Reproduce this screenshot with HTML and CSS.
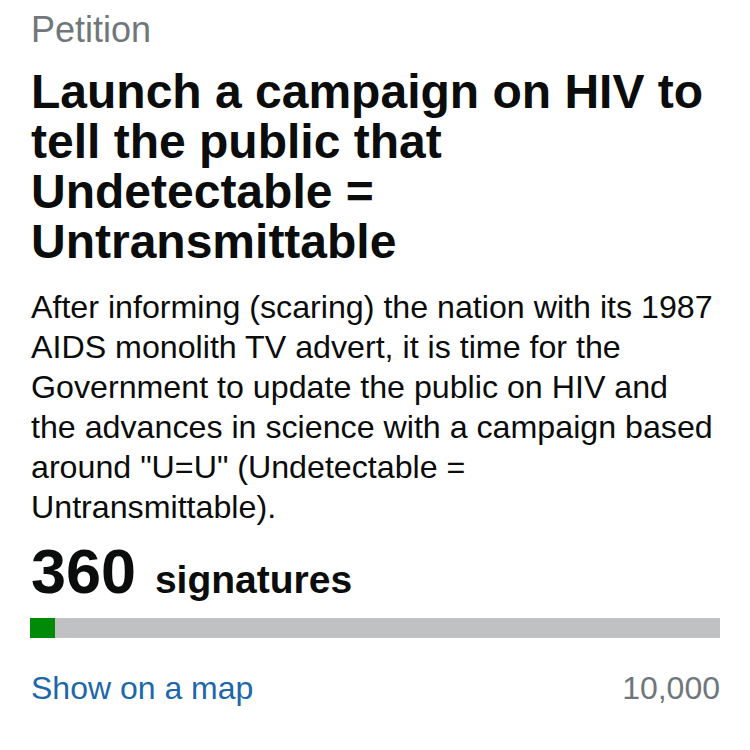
FILE: index.html
```html
<!DOCTYPE html>
<html lang="en">
<head>
<meta charset="utf-8">
<title>Petition</title>
<link rel="stylesheet" href="styles.css">
</head>
<body>
<main class="petition">
  <p class="kicker">Petition</p>
  <h1 class="title">Launch a campaign on HIV to tell the public that Undetectable = Untransmittable</h1>
  <p class="summary">After informing (scaring) the nation with its 1987 AIDS monolith TV advert, it is time for the Government to update the public on HIV and the advances in science with a campaign based around "U=U" (Undetectable = Untransmittable).</p>
  <p class="signatures"><span class="count">360</span> <span class="label">signatures</span></p>
  <div class="progress"><div class="progress-fill" style="width: 3.6%"></div></div>
  <div class="footer-row">
    <a class="map-link" href="#">Show on a map</a>
    <span class="target">10,000</span>
  </div>
</main>
</body>
</html>
```

FILE: styles.css
```css
html, body {
  margin: 0;
  padding: 0;
  background: #ffffff;
}

body {
  font-family: "Liberation Sans", Arial, Helvetica, sans-serif;
  color: #0b0c0c;
}

.petition {
  padding: 10px 30px 0 30px;
  display: flex;
  flex-direction: column;
}

.kicker {
  margin: 0;
  font-size: 36px;
  line-height: 40px;
  color: #6f777b;
  padding-left: 1px;
}

.title {
  margin: 17px 0 0 0;
  font-size: 48px;
  line-height: 50px;
  font-weight: 700;
  padding-left: 1px;
}

.summary {
  margin: 20px 0 0 0;
  font-size: 32.2px;
  line-height: 40px;
  padding-left: 1px;
  padding-right: 3px;
}

.signatures {
  margin: 9px 0 0 0;
  font-size: 64px;
  line-height: 70px;
  font-weight: 700;
  padding-left: 1px;
}

.count {
  font-size: 63px;
  line-height: 1;
}

.label {
  font-size: 39px;
  line-height: 1;
  margin-left: 1px;
}

.progress {
  margin-top: 12px;
  height: 20px;
  background: #bfc1c3;
}

.progress-fill {
  height: 100%;
  background: #008a07;
}

.footer-row {
  margin-top: 30px;
  display: flex;
  justify-content: space-between;
  font-size: 32px;
  line-height: 40px;
}

.map-link {
  color: #1d67aa;
  text-decoration: none;
  padding-left: 1px;
}

.target {
  color: #6f777b;
}
```
